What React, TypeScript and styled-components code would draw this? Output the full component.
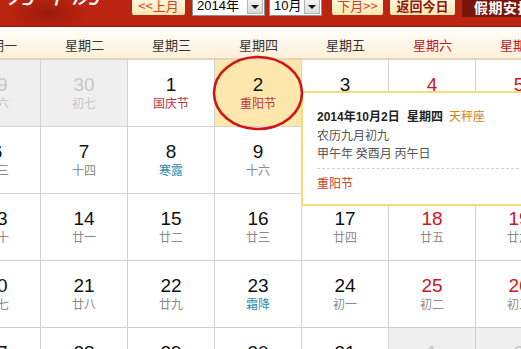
import styled, { createGlobalStyle } from "styled-components";

const GlobalStyle = createGlobalStyle`
  body {
    margin: 0;
    background: #fff;
    font-family: "Liberation Sans", "Noto Sans CJK SC", sans-serif;
  }
`;

type LunarKind = "normal" | "holiday" | "term";

type Day = {
  day: number;
  lunar: string;
  other?: boolean;
  kind?: LunarKind;
  today?: boolean;
};

const weekdays = ["星期一", "星期二", "星期三", "星期四", "星期五", "星期六", "星期日"];

const weeks: Day[][] = [
  [
    { day: 29, lunar: "初六", other: true },
    { day: 30, lunar: "初七", other: true },
    { day: 1, lunar: "国庆节", kind: "holiday" },
    { day: 2, lunar: "重阳节", kind: "holiday", today: true },
    { day: 3, lunar: "初十" },
    { day: 4, lunar: "十一" },
    { day: 5, lunar: "十二" },
  ],
  [
    { day: 6, lunar: "十三" },
    { day: 7, lunar: "十四" },
    { day: 8, lunar: "寒露", kind: "term" },
    { day: 9, lunar: "十六" },
    { day: 10, lunar: "十七" },
    { day: 11, lunar: "十八" },
    { day: 12, lunar: "十九" },
  ],
  [
    { day: 13, lunar: "二十" },
    { day: 14, lunar: "廿一" },
    { day: 15, lunar: "廿二" },
    { day: 16, lunar: "廿三" },
    { day: 17, lunar: "廿四" },
    { day: 18, lunar: "廿五" },
    { day: 19, lunar: "廿六" },
  ],
  [
    { day: 20, lunar: "廿七" },
    { day: 21, lunar: "廿八" },
    { day: 22, lunar: "廿九" },
    { day: 23, lunar: "霜降", kind: "term" },
    { day: 24, lunar: "初一" },
    { day: 25, lunar: "初二" },
    { day: 26, lunar: "初三" },
  ],
  [
    { day: 27, lunar: "初四" },
    { day: 28, lunar: "初五" },
    { day: 29, lunar: "初六" },
    { day: 30, lunar: "初七" },
    { day: 31, lunar: "初八" },
    { day: 1, lunar: "初九", other: true },
    { day: 2, lunar: "初十", other: true },
  ],
];

const Page = styled.div`
  position: relative;
  width: 521px;
  height: 349px;
  overflow: hidden;
`;

const TopBar = styled.div`
  display: flex;
  align-items: flex-start;
  height: 26px;
  border-bottom: 1px solid #9c1c0c;
  background:
    radial-gradient(ellipse 40px 18px at 48px 14px, rgba(120, 16, 6, 0.45), transparent),
    #ba2410;
  overflow: hidden;
`;

const Logo = styled.div`
  width: 132px;
  flex: none;
  margin-top: -30px;
  padding-left: 8px;
  box-sizing: border-box;
  color: #fff;
  font-size: 30px;
  font-style: italic;
  letter-spacing: 2px;
  line-height: 40px;
  font-family: "Noto Sans CJK SC", sans-serif;
`;

const Controls = styled.div`
  display: flex;
  align-items: flex-start;
  margin-top: -5px;
`;

const NavButton = styled.div<{ $w: number; $bold?: boolean; $gap: number }>`
  width: ${(p) => p.$w}px;
  height: 20px;
  margin-right: ${(p) => p.$gap}px;
  box-sizing: border-box;
  display: flex;
  align-items: flex-end;
  justify-content: center;
  padding-bottom: 2px;
  background: linear-gradient(#fffbea, #fde7ad);
  border-radius: 2px;
  color: ${(p) => (p.$bold ? "#8a1808" : "#d0402a")};
  font-size: 13px;
  font-weight: ${(p) => (p.$bold ? "bold" : "normal")};
  font-family: "Noto Sans CJK SC", sans-serif;
  line-height: 15px;
`;

const Select = styled.div<{ $w: number; $gap: number }>`
  width: ${(p) => p.$w}px;
  height: 21px;
  margin-right: ${(p) => p.$gap}px;
  box-sizing: border-box;
  display: flex;
  align-items: flex-end;
  background: #fff;
  border: 1px solid #8e8e8e;
  border-top: none;
  font-size: 13px;
  color: #000;
  font-family: "Liberation Sans", "Noto Sans CJK SC", sans-serif;
`;

const SelectText = styled.span`
  flex: 1;
  padding: 0 0 2px 4px;
  line-height: 14px;
`;

const SelectArrow = styled.span`
  width: 16px;
  height: 15px;
  margin: 0 1px 1px 0;
  box-sizing: border-box;
  display: flex;
  align-items: center;
  justify-content: center;
  background: linear-gradient(#f4f4f4, #d8d8d8);
  border: 1px solid #b4b4b4;
  &::after {
    content: "";
    border-left: 4px solid transparent;
    border-right: 4px solid transparent;
    border-top: 4px solid #111;
  }
`;

const HolidayTab = styled.div`
  width: 90px;
  height: 22px;
  box-sizing: border-box;
  padding: 5px 0 0 12px;
  background: #7a1509;
  color: #fff;
  font-size: 14px;
  font-weight: bold;
  line-height: 15px;
  font-family: "Noto Sans CJK SC", sans-serif;
  letter-spacing: 0.5px;
`;

const Calendar = styled.div`
  margin-left: -46px;
  width: 609px;
`;

const WeekHeader = styled.div`
  display: grid;
  grid-template-columns: repeat(7, 87px);
  height: 30px;
  margin-top: 1px;
  background: linear-gradient(#fffefb, #fcf0d8);
  border-bottom: 2px solid #e2d6c2;
`;

const WeekName = styled.div<{ $weekend: boolean }>`
  display: flex;
  align-items: center;
  justify-content: center;
  padding-top: 2px;
  font-size: 13px;
  color: ${(p) => (p.$weekend ? "#c3141c" : "#333")};
  font-family: "Noto Sans CJK SC", sans-serif;
`;

const DayGrid = styled.div`
  display: grid;
  grid-template-columns: repeat(7, 87px);
  grid-auto-rows: 67px;
`;

const Cell = styled.div<{ $other?: boolean; $today?: boolean }>`
  box-sizing: border-box;
  display: flex;
  flex-direction: column;
  align-items: center;
  padding-top: 14px;
  border-right: 1px solid #d2d2d2;
  border-bottom: 1px solid #d2d2d2;
  background: ${(p) => (p.$other ? "#efefef" : p.$today ? "#fde7ad" : "#fff")};
`;

const DayNum = styled.div<{ $other?: boolean; $weekend: boolean }>`
  font-size: 19px;
  line-height: 22px;
  color: ${(p) => (p.$other ? "#c6c6c6" : p.$weekend ? "#d0141f" : "#111")};
`;

const lunarColor: Record<LunarKind, string> = {
  normal: "#8a8a8a",
  holiday: "#be3344",
  term: "#2f8fb0",
};

const Lunar = styled.div<{ $other?: boolean; $kind: LunarKind }>`
  font-size: 12px;
  line-height: 14px;
  font-family: "Noto Sans CJK SC", sans-serif;
  color: ${(p) => (p.$other ? "#c6c6c6" : lunarColor[p.$kind])};
`;

const TodayRing = styled.svg`
  position: absolute;
  left: 211px;
  top: 55px;
  pointer-events: none;
  z-index: 2;
`;

const Popup = styled.div`
  position: absolute;
  left: 301px;
  top: 91px;
  width: 240px;
  box-sizing: border-box;
  padding: 14px 0 12px 14px;
  background: #fff;
  border: 2px solid #f5dc74;
  font-size: 12px;
  line-height: 18px;
  color: #555;
  font-family: "Noto Sans CJK SC", sans-serif;
  z-index: 1;
`;

const PopTitle = styled.div`
  color: #222;
  font-weight: bold;
  font-family: "Liberation Sans", "Noto Sans CJK SC", sans-serif;
  word-spacing: 4px;
`;

const Zodiac = styled.span`
  margin-left: 6px;
  color: #d9801a;
  font-weight: normal;
  font-family: "Noto Sans CJK SC", sans-serif;
`;

const Divider = styled.div`
  margin: 6px 0 5px;
  border-top: 1px dashed #cfcfcf;
`;

const PopFestival = styled.div`
  color: #c8401c;
`;

export default function App() {
  return (
    <Page>
      <GlobalStyle />
      <TopBar>
        <Logo>万年历</Logo>
        <Controls>
          <NavButton $w={53} $gap={7}>&lt;&lt;上月</NavButton>
          <Select $w={73} $gap={4}>
            <SelectText>2014年</SelectText>
            <SelectArrow />
          </Select>
          <Select $w={53} $gap={10}>
            <SelectText>10月</SelectText>
            <SelectArrow />
          </Select>
          <NavButton $w={51} $gap={7}>下月&gt;&gt;</NavButton>
          <NavButton $w={65} $gap={7} $bold>返回今日</NavButton>
          <HolidayTab>假期安排</HolidayTab>
        </Controls>
      </TopBar>
      <Calendar>
        <WeekHeader>
          {weekdays.map((w, i) => (
            <WeekName key={w} $weekend={i >= 5}>{w}</WeekName>
          ))}
        </WeekHeader>
        <DayGrid>
          {weeks.map((week, wi) =>
            week.map((d, i) => (
              <Cell key={`${wi}-${i}`} $other={d.other} $today={d.today}>
                <DayNum $other={d.other} $weekend={i >= 5}>{d.day}</DayNum>
                <Lunar $other={d.other} $kind={d.kind || "normal"}>{d.lunar}</Lunar>
              </Cell>
            ))
          )}
        </DayGrid>
      </Calendar>
      <TodayRing width="96" height="80" viewBox="0 0 96 80">
        <ellipse cx="47" cy="38" rx="44" ry="36" fill="none" stroke="#cf1616" strokeWidth="2.6" />
      </TodayRing>
      <Popup>
        <PopTitle>
          2014年10月2日 星期四<Zodiac>天秤座</Zodiac>
        </PopTitle>
        <div>农历九月初九</div>
        <div>甲午年 癸酉月 丙午日</div>
        <Divider />
        <PopFestival>重阳节</PopFestival>
      </Popup>
    </Page>
  );
}
